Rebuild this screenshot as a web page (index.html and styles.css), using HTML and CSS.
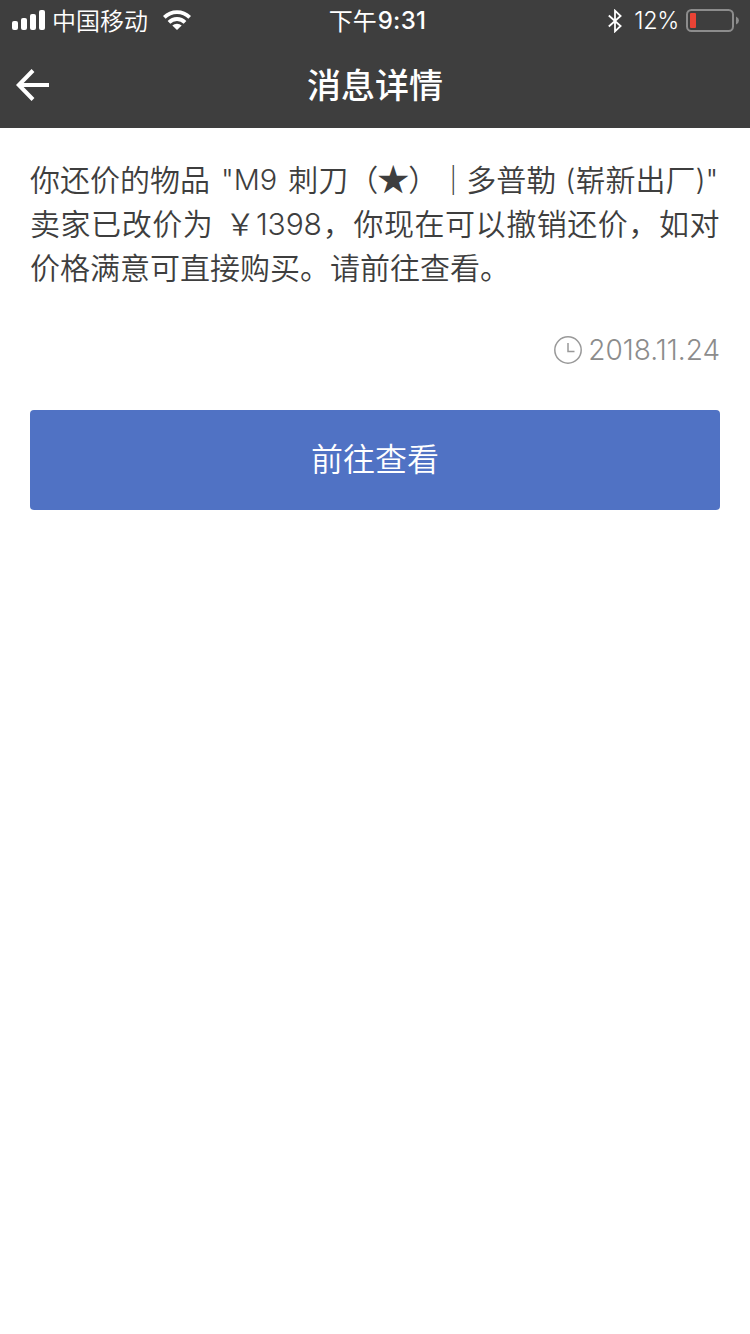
FILE: index.html
```html
<!DOCTYPE html>
<html lang="zh-CN">
<head>
<meta charset="utf-8">
<title>消息详情</title>
<link rel="stylesheet" href="styles.css">
</head>
<body>
<header class="top">
  <div class="status">
    <div class="status-left">
      <svg class="signal" width="34" height="20" viewBox="0 0 34 20" fill="#fff"><rect x="0" y="11" width="6" height="9" rx="2"/><rect x="9" y="8" width="6" height="12" rx="2"/><rect x="18" y="4" width="6" height="16" rx="2"/><rect x="27" y="0" width="6" height="20" rx="2"/></svg>
      <span class="carrier">中国移动</span>
      <svg class="wifi" width="28" height="20" viewBox="0 0 28 20" fill="none" stroke="#fff" stroke-width="3.800"><path d="M1.300 7.300A18 18 0 0 1 26.700 7.300"/><path d="M6 12.300A11.300 11.300 0 0 1 22 12.300"/><path d="M14 20L9.300 15.600A6.600 6.600 0 0 1 18.700 15.600Z" fill="#fff" stroke="none"/></svg>
    </div>
    <div class="clock">下午<b>9:31</b></div>
    <div class="status-right">
      <svg class="bluetooth" width="14" height="24" viewBox="0 0 14 24" fill="none" stroke="#fff" stroke-width="1.800"><path d="M.8 6.500L12.600 17L7 22.300V1.700L12.600 7L.8 17.500"/></svg>
      <span class="percent">12%</span>
      <svg class="battery" width="53" height="24" viewBox="0 0 53 24"><rect x="1" y="1" width="46" height="21" rx="4.500" fill="none" stroke="#8c8c8c" stroke-width="2"/><rect x="4" y="4" width="6" height="15" rx="1" fill="#ea4335"/><path d="M50 7.500Q53 9 53 11.500T50 15.500Z" fill="#8c8c8c"/></svg>
    </div>
  </div>
  <div class="nav">
    <svg class="back" width="34" height="32" viewBox="0 0 34 32" fill="none" stroke="#fff" stroke-width="4"><path d="M17 1.500L2.800 16L17 30.500M2.800 16H33"/></svg>
    <h1 class="title">消息详情</h1>
  </div>
</header>
<main class="content">
  <p class="message">
    <span class="line"><span>你还价的物品</span><span class="latin item">"M9</span><span>刺刀（</span><span class="star">★</span><span class="bar">）｜</span><span>多普勒</span><span class="latin paren">(</span><span>崭新出厂</span><span class="latin">)"</span></span>
    <span class="line wide"><span>卖家已改价为</span><span class="yen">￥</span><span class="latin price">1398</span><span>，你现在可以撤销还价，如对</span></span>
    <span class="line"><span>价格满意可直接购买。请前往查看。</span></span>
  </p>
  <div class="date">
    <svg width="28" height="28" viewBox="0 0 28 28" fill="none" stroke="#999" stroke-width="1.500"><circle cx="14" cy="14" r="13.200"/><path d="M14 7V15.500H20.500"/></svg>
    <time>2018.11.24</time>
  </div>
  <button class="action">前往查看</button>
</main>
</body>
</html>
```
FILE: styles.css
```css
* { box-sizing: border-box; }
body {
  margin: 0;
  background: #fff;
  font-family: "Noto Sans CJK SC", sans-serif;
  font-weight: 350;
}
svg { display: block; flex: none; }
.top {
  height: 128px;
  background: #3e3e3e;
  color: #fff;
}
.status {
  display: grid;
  grid-template-columns: 1fr auto 1fr;
  align-items: center;
  height: 41px;
  padding: 0 11px 0 12px;
  font-size: 24px;
  line-height: 40px;
}
.status-left, .status-right { display: flex; align-items: center; }
.status-left { padding-bottom: 1px; line-height: 38px; }
.carrier { margin: 0 15px 0 6px; }
.clock { display: flex; font-weight: 400; padding-left: 4px; }
.clock b { font: 500 24px/41px Inter, sans-serif; letter-spacing: .3px; padding-left: 1px; }
.status-right { justify-content: flex-end; }
.percent { font: 350 23.500px/41px Inter, sans-serif; margin: 0 7px 0 12px; letter-spacing: -.3px; }
.nav {
  display: grid;
  grid-template-columns: 34px 1fr 34px;
  align-items: center;
  height: 87px;
  padding: 0 16px;
}
.title {
  margin: 0;
  font-size: 34px;
  line-height: 86px;
  height: 87px;
  font-weight: 500;
  text-align: center;
}
.content { padding: 30px; }
.message { margin: 0; color: #3e3e3e; font-size: 30px; line-height: 40px; }
.line { display: flex; white-space: nowrap; height: 44px; }
.latin { font: 300 29px/44px Inter, sans-serif; }
.item { margin: 0 11px 0 11px; }
.star { font-size: 32px; line-height: 38px; margin: 0 -1px; }
.bar { margin-right: -2px; }
.paren { margin-left: 9px; }
.wide { letter-spacing: .55px; }
.yen { margin-left: 12px; }
.price { font-size: 30px; letter-spacing: -.1px; margin-right: 1px; }
.date {
  display: flex;
  justify-content: flex-end;
  align-items: center;
  gap: 6px;
  height: 40px;
  margin-top: 40px;
  color: #8c8c8c;
  font: 300 28px/42px Inter, sans-serif;
}
.action {
  display: block;
  width: 100%;
  height: 100px;
  margin-top: 40px;
  padding: 0 0 6px;
  border: 0;
  border-radius: 4px;
  background: #5072c4;
  color: #fff;
  font: inherit;
  font-size: 32px;
}
```
